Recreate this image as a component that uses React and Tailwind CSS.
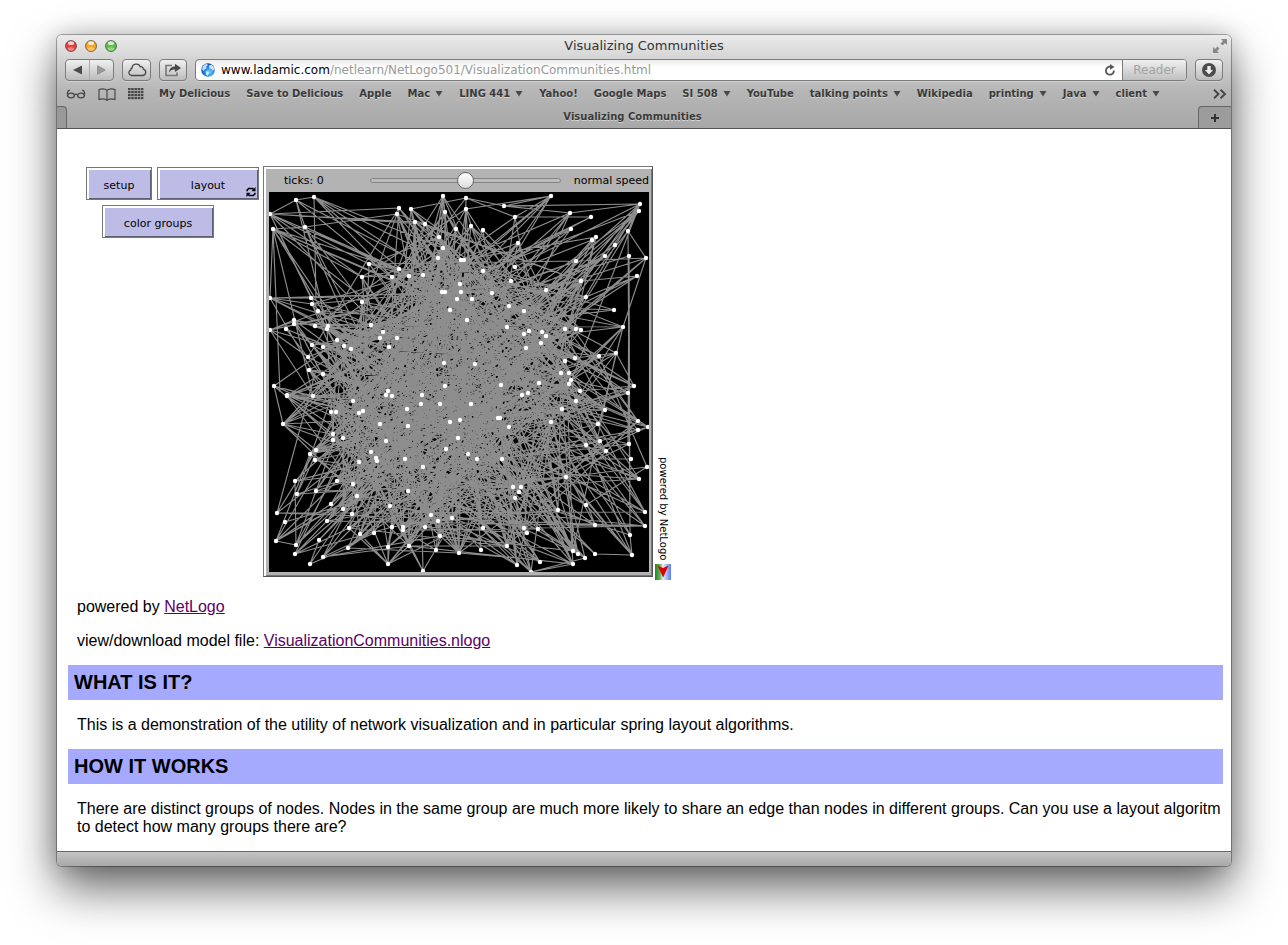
import React from "react";

const NODES = `27,8 45,5 1,22 4,37 36,35 100,72 93,85 93,110 130,16 128,22 142,17 146,30 156,32 174,4 176,20 187,37 170,45 174,56 169,66 130,77 123,85 140,84 154,83 192,68 191,92 192,100 173,100 176,100 188,107 181,118 1,106 42,106 43,112 49,119 1,138 17,137 25,128 25,132 46,134 59,134 58,137 43,153 54,155 68,148 75,154 82,157 39,165 40,178 54,182 102,133 114,140 111,146 128,146 120,155 175,171
197,6 197,17 202,34 214,38 235,14 246,25 249,51 282,4 301,21 302,37 322,25 323,48 327,45 346,53 336,64 359,39 360,64 371,12 370,19 377,66 368,84 307,69 312,89 317,105 345,118 354,135 347,161 330,164 296,137 307,137 312,138 277,98 246,75 242,89 214,79 195,68 223,101 203,107 240,114 255,119 198,128 238,135 255,142 260,139 273,140 277,144 272,151 257,156 206,172 296,169 306,166 292,181 300,181 302,188 300,192 270,191 232,193
5,194 18,203 18,204 44,204 84,209 14,232 62,220 67,220 90,221 94,219 119,199 117,203 123,204 153,203 152,212 176,194 171,212 138,217 139,234 111,232 181,230 191,228 64,242 64,248 74,246 117,249 189,246 102,260 107,266 108,269 90,270 47,258 41,262 46,268 136,267 154,275 177,257 26,289 28,302 47,299 68,289 84,292 88,304 62,312 74,317 83,322 58,329 121,314 139,299 8,321 16,330 7,349 27,353 26,362 41,372 50,348 54,365 80,336 91,342 79,356 105,341 123,335 134,335 134,338 119,355 140,354 119,372 154,379 162,323 169,329 156,335 171,344 167,358 183,326 190,361
253,203 259,201 202,212 311,199 307,209 293,217 336,218 329,232 282,230 240,235 229,226 231,226 365,194 359,201 369,229 379,235 369,238 360,252 317,253 331,249 337,259 362,267 378,275 370,287 199,262 208,267 233,267 297,285 244,295 252,295 250,300 246,306 317,313 289,318 376,320 376,334 326,333 361,343 363,363 326,362 316,366 309,362 304,359 304,372 271,370 248,373 238,354 262,380 255,336 258,341 269,337 214,336 212,358`
  .split(/\s+/)
  .map((pair) => pair.split(",").map(Number));

const OUTER_LINKS =
  "M1,22L27,8L45,5M27,8L36,35M45,5L47,106M27,8L58,134M1,22L130,16M1,22L146,30M1,22L156,32M4,37L36,35L128,22M4,37L11,200M4,37L44,204M4,37L1,106M1,22L93,85M1,22L100,72M1,22L42,106M1,22L49,119M1,22L58,137M45,5L123,85M45,5L140,84M45,5L169,66M45,5L174,56M4,37L93,85M4,37L100,110M4,37L130,77M4,37L75,154M36,35L130,77M36,35L93,110M1,106L42,106M1,106L43,112M1,106L59,134M1,138L25,128M1,138L39,165M1,138L44,204M5,194L14,232M5,194L44,204M14,232L62,242M14,232L47,258M142,17L197,6M174,4L156,32M174,4L170,90M197,6L235,14L282,4L246,25M282,4L249,51M282,4L223,101M282,4L197,17M197,6L246,25L322,25M235,14L371,12M235,14L301,21M371,12L301,21M371,12L359,39L377,66M371,12L307,69M371,12L246,75M370,19L312,89M370,19L336,64M370,19L277,98M370,19L240,114M370,19L214,79M377,66L307,69M377,66L277,98M377,66L296,137M377,66L354,135L330,232M368,84L317,105M368,84L260,139M368,84L277,144M359,39L361,343M360,64L359,252M360,64L361,343L363,363M369,229L293,130M379,235L300,181M379,235L317,253M378,275L330,164M378,275L297,285M378,275L317,313M370,287L244,295M370,287L317,253M376,320L311,199M376,320L297,217M376,334L317,253M376,334L255,336M363,363L317,313M363,363L297,285M363,363L326,362M361,343L317,253M8,321L47,178M8,321L47,258M7,349L27,353M7,349L68,289M7,349L62,312M7,349L88,304M7,349L41,262M27,353L84,292M27,353L26,289M27,353L47,299M26,362L80,336M26,362L123,335M41,372L88,304M41,372L79,356M41,372L50,348M54,365L105,341M54,365L140,354M54,365L171,344M54,365L214,336M119,372L80,336M119,372L91,342M119,372L119,355M119,372L140,354M154,379L134,338M154,379L140,354M190,361L79,356M190,361L248,366L304,372M262,380L304,372M262,380L212,336M248,373L169,329M248,373L183,326M304,372L246,306M304,359L233,267M309,362L250,300M316,366L252,295M262,380L316,366M347,161L304,359M354,135L277,144M345,118L277,98M345,118L240,114M347,161L306,166M347,161L365,194";

function buildLinks(count) {
  let seed = 4711;
  const next = () => {
    seed = (seed * 1664525 + 1013904223) % 4294967296;
    return seed / 4294967296;
  };
  let d = "";
  let made = 0;
  while (made < count) {
    const a = NODES[Math.floor(next() * NODES.length)];
    const b = NODES[Math.floor(next() * NODES.length)];
    const length = Math.hypot(a[0] - b[0], a[1] - b[1]);
    const mx = (a[0] + b[0]) / 2 - 185;
    const my = (a[1] + b[1]) / 2 - 205;
    const spread = Math.hypot(mx / 150, my / 170);
    if (length < 12 || next() < Math.pow(spread, 4) || next() > Math.exp(-length / 200) * 1.3) continue;
    d += `M${a[0]},${a[1]}L${b[0]},${b[1]}`;
    made += 1;
  }
  return d;
}

const LINKS = buildLinks(860);

function NetworkView() {
  return (
    <svg viewBox="0 0 380 380" className="block size-[380px] bg-black" role="img" aria-label="Network">
      <path d={OUTER_LINKS + LINKS} stroke="#8d8d8d" strokeWidth="1.150" fill="none" />
      {NODES.map(([x, y], i) => (
        <circle key={i} cx={x} cy={y} r="2.2" fill="#fff" />
      ))}
    </svg>
  );
}

const BOOKMARKS = [
  ["My Delicious"], ["Save to Delicious"], ["Apple"], ["Mac", 1], ["LING 441", 1], ["Yahoo!"], ["Google Maps"],
  ["SI 508", 1], ["YouTube"], ["talking points", 1], ["Wikipedia"], ["printing", 1], ["Java", 1], ["client", 1],
];

const toolButton =
  "flex h-[22px] items-center justify-center rounded-[4px] border border-[#7b7b7b] bg-linear-to-b from-[#f0f0f0] to-[#bcbcbc] shadow-[0_1px_0_#d0d0d0]";
const appletButton =
  "relative flex h-[33px] items-center justify-center border border-[#777] bg-[#bcbce6] pt-1 text-[11px] leading-4 text-black shadow-[inset_2px_2px_0_#fff,inset_-1px_-1px_0_#5f5f75]";

function Light({ label, color }) {
  return (
    <button aria-label={label} className="block size-3">
      <svg viewBox="0 0 12 12" className="size-3">
        <circle cx="6" cy="6" r="5.5" fill={color} stroke="#000" strokeOpacity=".45" />
        <ellipse cx="6" cy="3.2" rx="3" ry="1.9" fill="#fff" opacity=".75" />
        <ellipse cx="6" cy="9" rx="3.4" ry="1.8" fill="#fff" opacity=".35" />
      </svg>
    </button>
  );
}

function Toolbar() {
  return (
    <div className="flex h-[23px] items-start gap-2 pr-2 pl-2">
      <div className={toolButton + " w-[49px]"}>
        <button aria-label="Back" className="flex h-full flex-1 items-center justify-center border-r border-[#aaa]">
          <svg viewBox="0 0 9 10" className="h-[10px] w-[9px]"><path d="M9 .5v9L0 5z" fill="#4b4b4b" /></svg>
        </button>
        <button aria-label="Forward" className="flex h-full flex-1 items-center justify-center">
          <svg viewBox="0 0 9 10" className="h-[10px] w-[9px]"><path d="M.5.7v8.6L8.300 5z" fill="#999" stroke="#777" strokeWidth=".6" /></svg>
        </button>
      </div>
      <button aria-label="iCloud tabs" className={toolButton + " w-[29px]"}>
        <svg viewBox="0 0 20 14" className="h-[14px] w-5">
          <path d="M4.500 12.500h11a3.200 3.200 0 0 0 .8-6.300 2.300 2.300 0 0 0-3-2.400A4.300 4.300 0 0 0 5 5.200a1.800 1.800 0 0 0-1.300 1.900 2.800 2.800 0 0 0 .8 5.400z" fill="none" stroke="#484848" strokeWidth="1.300" />
        </svg>
      </button>
      <button aria-label="Share" className={toolButton + " w-[28px]"}>
        <svg viewBox="0 0 18 14" className="h-[14px] w-[18px]">
          <path d="M8 2.500H2v10h11V9.500" fill="none" stroke="#777" strokeWidth="1.600" />
          <path d="M5 9.500c.2-3.600 2.300-6 6-6V.8L17 5l-6 4V6.500C8.300 6.300 6.500 7.200 5 9.500z" fill="#484848" />
        </svg>
      </button>
      <div className="flex h-[22px] min-w-0 flex-1 overflow-hidden rounded-[4px] border border-[#7b7b7b] bg-linear-to-b from-[#ececec] to-white to-40% shadow-[0_1px_0_#d0d0d0]">
        <div className="flex min-w-0 flex-1 items-center pl-[5px]">
          <svg viewBox="0 0 14 14" className="size-[14px] shrink-0">
            <defs>
              <radialGradient id="globe" cx=".6" cy=".65" r=".7">
                <stop offset="0" stopColor="#6fd3ff" /><stop offset=".6" stopColor="#1f78df" /><stop offset="1" stopColor="#0e3f9e" />
              </radialGradient>
            </defs>
            <circle cx="7" cy="7" r="6.800" fill="url(#globe)" />
            <path d="M2 3.200C3.500 1.300 5.200.8 6.300 1l.4 1.500-1.500 1 .3 1.600L3.500 6.500 2.600 8 1 6.500zM8 2.500l2.800-.8 2 2.600.4 2.500-1.600 1-1-1.800-1.800-.4-.8-1.600zM5 8l2.600.7.4 1.500-1.500 2.600L5 11.500z" fill="#e5f6ff" opacity=".85" />
          </svg>
          <p className="ml-[6px] text-[12px] leading-4 whitespace-nowrap text-black">
            www.ladamic.com<span className="text-[#999]">/netlearn/NetLogo501/VisualizationCommunities.html</span>
          </p>
          <button aria-label="Reload" className="mr-[6px] ml-auto">
            <svg viewBox="0 0 12 12" className="size-3">
              <path d="M9.900 6.500A4 4 0 1 1 6 2.700h1" fill="none" stroke="#555" strokeWidth="1.800" /><path d="M6 0l4.500 2.900L6 5.700z" fill="#555" />
            </svg>
          </button>
        </div>
        <button className="w-16 border-l border-[#7b7b7b] bg-linear-to-b from-[#f0f0f0] to-[#c0c0c0] text-[12px] leading-4 text-[#a2a2a2]">Reader</button>
      </div>
      <button aria-label="Downloads" className={toolButton + " w-[28px]"}>
        <svg viewBox="0 0 14 14" className="size-[14px]">
          <circle cx="7" cy="7" r="7" fill="#4c4c4c" /><path d="M5.300 3h3.400v4H11l-4 4.500L3 7h2.300z" fill="#eee" />
        </svg>
      </button>
    </div>
  );
}

function BookmarkBar() {
  return (
    <nav className="flex h-6 items-center pr-1 pl-[9px] text-[#3a3a3a]">
      <div className="flex w-[93px] shrink-0 items-center gap-3">
        <button aria-label="Reading list">
          <svg viewBox="0 0 20 10" className="h-[10px] w-5" fill="none" stroke="#484848" strokeWidth="1.300">
            <path d="M1.500 6.500C1 3 2 1.200 4 1.500M18.500 6.500C19 3 18 1.200 16 1.500M8.500 5.800c1-.8 2-.8 3 0" /><ellipse cx="5" cy="6.500" rx="3.400" ry="2.300" /><ellipse cx="15" cy="6.500" rx="3.400" ry="2.300" />
          </svg>
        </button>
        <button aria-label="Bookmarks">
          <svg viewBox="0 0 18 13" className="h-[13px] w-[18px]" fill="none" stroke="#484848" strokeWidth="1.200">
            <path d="M9 2.300C7 .6 4 .5 1 1.500v10c3-1 6-.9 8 .8 2-1.700 5-1.800 8-.8v-10c-3-1-6-.9-8 .8zM9 2.300v10" />
          </svg>
        </button>
        <button aria-label="Top sites">
          <svg viewBox="0 0 16 12" className="h-3 w-4">
            {[0, 1, 2, 3].map((r) => [0, 1, 2, 3, 4].map((c) => <rect key={r + "-" + c} x={c * 3.2} y={r * 3} width="2.600" height="2.200" fill="#484848" />))}
          </svg>
        </button>
      </div>
      <div className="flex flex-1 gap-4 text-[10px] leading-4 font-bold whitespace-nowrap text-shadow-[0_1px_0_#d5d5d5]">
        {BOOKMARKS.map(([name, menu]) => (
          <a key={name} href="#" className="flex items-center gap-[5px]">
            {name}
            {menu && <svg viewBox="0 0 8 6" className="h-[6px] w-2"><path d="M.5 0h7L4 5.500z" fill="#484848" /></svg>}
          </a>
        ))}
      </div>
      <button aria-label="More bookmarks">
        <svg viewBox="0 0 14 10" className="h-[10px] w-[14px]"><path d="M1 .8L5.500 5 1 9.200M7.500.8L12 5 7.500 9.200" fill="none" stroke="#444" strokeWidth="1.900" /></svg>
      </button>
    </nav>
  );
}

function Heading({ children }) {
  return <h2 className="mr-2 ml-[11px] h-[35px] bg-[#a6aaff] pl-[6px] text-[20px] leading-[34px] font-bold">{children}</h2>;
}

function Applet() {
  return (
    <div className="flex pl-[29px] font-['DejaVu_Sans','Noto_Sans',sans-serif]">
      <div className="flex w-[173px] flex-col gap-[5px] pt-px">
        <div className="flex gap-[5px]">
          <button className={appletButton + " w-[66px]"}>setup</button>
          <button className={appletButton + " w-[102px]"}>
            layout
            <svg viewBox="0 0 10 10" className="absolute right-[2px] bottom-[2px] size-[10px]">
              <path d="M1.200 4.200V3l1.500-1.500h4L8 3M8.800 5.800V7L7.300 8.500h-4L2 7" fill="none" stroke="#000" strokeWidth="1.700" /><path d="M9.500 0v4.300H5.500zM.5 10V5.700h4z" />
            </svg>
          </button>
        </div>
        <button className={appletButton + " ml-4 w-28"}>color groups</button>
      </div>
      <div className="ml-1 border border-t-[#777] border-r-[#555] border-b-[#555] border-l-[#777] bg-[#b3b3b3] pt-[2px] pr-[3px] pb-1 pl-[5px] shadow-[inset_2px_2px_0_#fff,inset_-1px_-1px_0_#777]">
        <div className="flex h-[23px] items-center text-[11px] leading-4">
          <span className="w-[101px] pl-[15px]">ticks: 0</span>
          <input
            type="range" aria-label="Speed" defaultValue="50"
            className="h-4 w-[191px] appearance-none bg-transparent [&::-webkit-slider-runnable-track]:h-[5px] [&::-webkit-slider-runnable-track]:rounded-full [&::-webkit-slider-runnable-track]:border [&::-webkit-slider-runnable-track]:border-[#858585] [&::-webkit-slider-runnable-track]:bg-[#bbb] [&::-webkit-slider-thumb]:-mt-[7px] [&::-webkit-slider-thumb]:size-[17px] [&::-webkit-slider-thumb]:appearance-none [&::-webkit-slider-thumb]:rounded-full [&::-webkit-slider-thumb]:border [&::-webkit-slider-thumb]:border-[#666] [&::-webkit-slider-thumb]:bg-linear-to-b [&::-webkit-slider-thumb]:from-white [&::-webkit-slider-thumb]:to-[#ddd]"
          />
          <span className="ml-auto whitespace-nowrap">normal speed</span>
        </div>
        <NetworkView />
      </div>
      <div className="ml-[2px] flex w-4 flex-col items-center justify-end gap-1 self-end">
        <span className="text-[10px] leading-4 whitespace-nowrap [writing-mode:vertical-rl]">powered by NetLogo</span>
        <svg viewBox="0 0 16 16" className="-mb-[3px] size-4">
          <defs>
            <linearGradient id="logo"><stop offset="0" stopColor="#1d8c1d" /><stop offset=".3" stopColor="#5fae5f" /><stop offset=".5" stopColor="#e8f2ee" /><stop offset="1" stopColor="#5a7cf0" /></linearGradient>
          </defs>
          <path d="M0 0h16v16H0z" fill="url(#logo)" /><path d="M2.500 1.500L8 4l5.500-2.500L8.200 13.500z" fill="#e00000" />
        </svg>
      </div>
    </div>
  );
}

export default function App() {
  return (
    <main className="min-h-screen bg-white px-[57px] pt-[35px] pb-[79px] font-['DejaVu_Sans','Noto_Sans',sans-serif]">
      <div className="overflow-hidden rounded-[5px] shadow-[0_0_0_1px_rgba(0,0,0,0.3),0_22px_48px_rgba(0,0,0,0.6),0_0_24px_rgba(0,0,0,0.2)]">
        <header className="border-b border-[#555] bg-linear-to-b from-[#ebebeb] via-[#b6b6b6] via-60% to-[#a8a8a8]">
          <div className="grid h-6 grid-cols-[1fr_auto_1fr] items-center px-2 pb-[2px]">
            <div className="flex gap-2">
              <Light label="Close" color="#e8403f" />
              <Light label="Minimize" color="#f5a623" />
              <Light label="Zoom" color="#5cc04a" />
            </div>
            <h1 className="text-[13px] leading-4 text-[#333]">Visualizing Communities</h1>
            <button aria-label="Full screen" className="-mr-1 justify-self-end">
              <svg viewBox="0 0 14 14" className="size-[14px]" fill="#888"><path d="M8 0h6v6l-2-2-2.500 2.500-2-2L10 2zM6 14H0V8l2 2 2.500-2.500 2 2L4 12z" /></svg>
            </button>
          </div>
          <Toolbar />
          <BookmarkBar />
          <div className="flex h-[22px] items-stretch">
            <div className="w-[10px] rounded-tr-[4px] border-t border-r border-[#666] bg-[#999]" />
            <div className="flex-1 pt-px text-center text-[10px] leading-5 font-bold text-[#3a3a3a] text-shadow-[0_1px_0_#d5d5d5]">Visualizing Communities</div>
            <button aria-label="New tab" className="flex w-[33px] items-center justify-center rounded-tl-[4px] border-t border-l border-[#666] bg-[#9c9c9c]">
              <svg viewBox="0 0 8 8" className="size-2"><path d="M3 0h2v3h3v2H5v3H3V5H0V3h3z" fill="#333" /></svg>
            </button>
          </div>
        </header>
        <section className="bg-white pt-[37px] pb-[15px] font-['Liberation_Sans',Arial,sans-serif] text-[16px] leading-[18px] text-black">
          <Applet />
          <p className="mt-[21px] ml-5">powered by <a href="#" className="text-[#5c0066] underline">NetLogo</a></p>
          <p className="mt-4 mb-[15px] ml-5">view/download model file: <a href="#" className="text-[#5c0066] underline">VisualizationCommunities.nlogo</a></p>
          <Heading>WHAT IS IT?</Heading>
          <p className="mt-4 mb-[15px] ml-5">This is a demonstration of the utility of network visualization and in particular spring layout algorithms.</p>
          <Heading>HOW IT WORKS</Heading>
          <p className="mt-4 mr-1 ml-5">There are distinct groups of nodes. Nodes in the same group are much more likely to share an edge than nodes in different groups. Can you use a layout algoritm to detect how many groups there are?</p>
        </section>
        <footer className="h-[15px] border-t border-[#666] bg-linear-to-b from-[#c4c4c4] to-[#a8a8a8]" />
      </div>
    </main>
  );
}
